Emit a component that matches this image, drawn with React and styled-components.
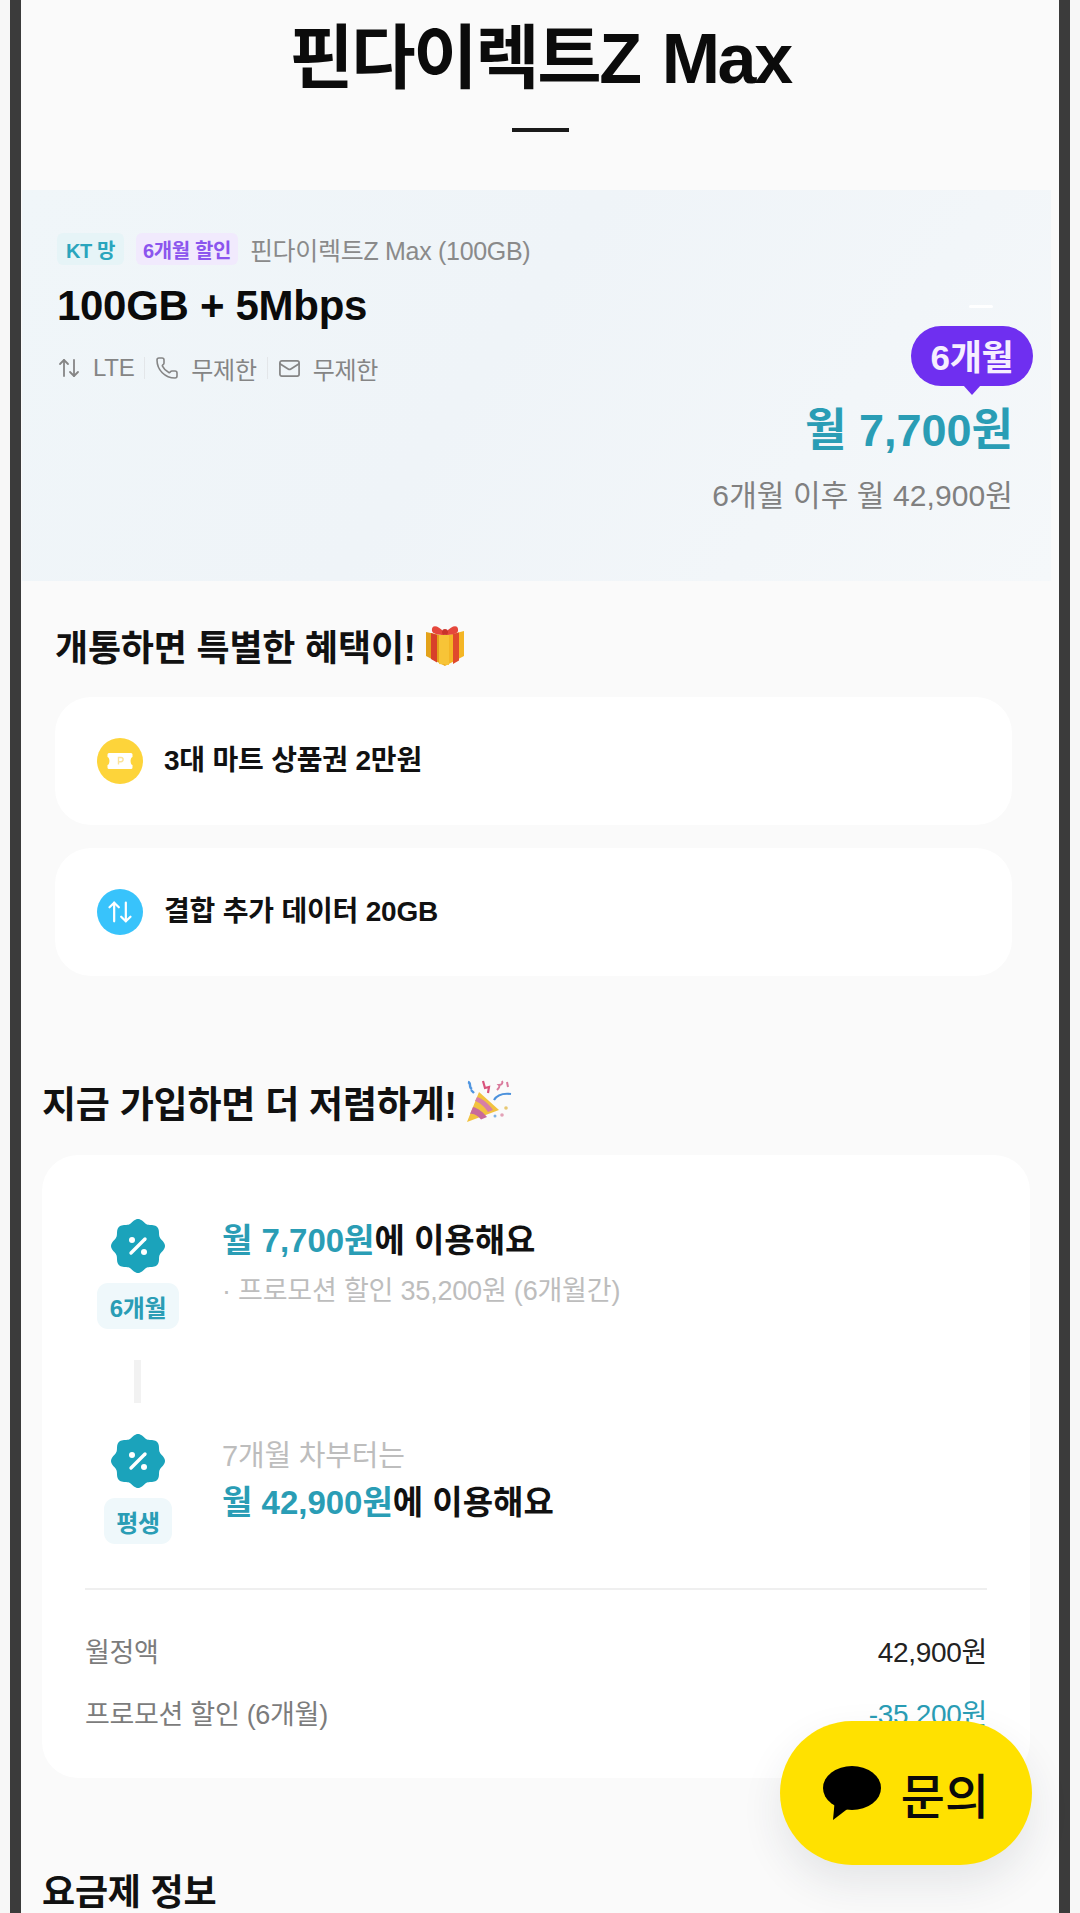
import React from 'react';
import styled, { createGlobalStyle } from 'styled-components';
import { ArrowUpDown, Phone, Mail } from 'lucide-react';

const GlobalStyle = createGlobalStyle`
  html, body { margin: 0; padding: 0; background: #f7f7f7; }
  * { box-sizing: border-box; }
  body { font-family: "Liberation Sans", "Noto Sans CJK KR", sans-serif; }
`;

const Viewport = styled.div`
  width: 1080px;
  height: 1913px;
  padding: 0 10px;
  overflow: hidden;
  background: #f7f7f7;
`;

const Device = styled.main`
  position: relative;
  height: 1913px;
  border-left: 11px solid #3b3b3b;
  border-right: 11px solid #3b3b3b;
  background: #fafafa;
`;

const PageTitle = styled.h1`
  margin: 0;
  padding-top: 15px;
  height: 88px;
  text-align: center;
  font-size: 70px;
  line-height: 88px;
  font-weight: 700;
  letter-spacing: -2.4px;
  word-spacing: 5px;
  color: #0b0b0b;
`;

const TitleRule = styled.div`
  width: 57px;
  height: 4px;
  margin: 40px auto 0;
  background: #1a1a1a;
`;

const Hero = styled.section`
  position: relative;
  width: 1029px;
  height: 391px;
  margin: 58px 0 0 1px;
  padding: 43px 0 0 35px;
  background: linear-gradient(125deg, #f0f6f9 0%, #eff4f8 45%, #f2f6f9 75%, #f5f8fa 100%);
`;

const TagRow = styled.div`
  display: flex;
  align-items: center;
  height: 32px;
`;

const Tag = styled.span`
  display: flex;
  align-items: center;
  height: 32px;
  padding: 0 ${p => p.$pad}px;
  margin-right: ${p => p.$gap}px;
  border-radius: 6px;
  font-size: 20px;
  font-weight: 700;
  letter-spacing: -0.4px;
  color: ${p => p.$fg};
  background: ${p => p.$bg};
`;

const PlanName = styled.span`
  font-size: 25px;
  letter-spacing: -0.3px;
  color: #8a8a8a;
`;

const Allowance = styled.h2`
  margin: 16px 0 0;
  font-size: 42px;
  line-height: 50px;
  font-weight: 700;
  letter-spacing: -0.3px;
  color: #0b0b0b;
`;

const SpecRow = styled.div`
  display: flex;
  align-items: center;
  height: 30px;
  margin-top: 22px;
  color: #858585;
  font-size: 24px;
  letter-spacing: -0.3px;
`;

const Spec = styled.span`
  display: flex;
  align-items: center;
  gap: 12px;
  svg { flex: none; }
`;

const SpecDivider = styled.i`
  width: 1px;
  height: 22px;
  margin: 0 10px;
  background: #e3e6e9;
`;

const PriceBlock = styled.div`
  position: absolute;
  right: 38px;
  top: 211px;
  text-align: right;
`;

const PriceNow = styled.div`
  font-size: 45px;
  line-height: 60px;
  font-weight: 700;
  color: #2a9db5;
`;

const PriceLater = styled.div`
  margin-top: 15px;
  font-size: 30px;
  line-height: 40px;
  letter-spacing: 0.1px;
  color: #808080;
`;

const PeriodBubble = styled.div`
  position: absolute;
  left: 889px;
  top: 136px;
  width: 122px;
  height: 60px;
  padding-bottom: 3px;
  display: flex;
  align-items: center;
  justify-content: center;
  border-radius: 30px;
  background: #6f2ff0;
  color: #f6eeff;
  font-size: 35px;
  font-weight: 700;
  letter-spacing: -0.3px;
  &::after {
    content: '';
    position: absolute;
    left: 52px;
    bottom: -9px;
    border-left: 9px solid transparent;
    border-right: 9px solid transparent;
    border-top: 10px solid #6f2ff0;
  }
`;

const Glint = styled.i`
  position: absolute;
  left: 947px;
  top: 115px;
  width: 24px;
  height: 3px;
  border-radius: 2px;
  background: #fff;
`;

const Benefits = styled.section`
  padding: 41px 47px 0 34px;
`;

const SectionHeading = styled.h3`
  display: flex;
  align-items: center;
  gap: 7px;
  margin: 0;
  height: ${p => p.$h}px;
  font-size: ${p => p.$size}px;
  font-weight: 700;
  letter-spacing: -0.2px;
  color: #111;
  svg { flex: none; }
`;

const BenefitList = styled.div`
  display: flex;
  flex-direction: column;
  gap: 23px;
  margin-top: 29px;
`;

const BenefitCard = styled.div`
  display: flex;
  align-items: center;
  gap: 21px;
  height: 128px;
  padding: 0 0 6px 42px;
  border-radius: 36px;
  background: #fff;
  font-size: 28px;
  font-weight: 700;
  letter-spacing: -0.2px;
  color: #111;
`;

const IconCircle = styled.span`
  display: flex;
  align-items: center;
  justify-content: center;
  width: 46px;
  height: 46px;
  border-radius: 50%;
  background: ${p => p.$bg};
  transform: translateY(3px);
  svg { display: block; }
`;

const Savings = styled.section`
  padding: 101px 29px 0 21px;
`;

const SavingsCard = styled.div`
  margin-top: 28px;
  height: 623px;
  padding: 64px 43px 0 43px;
  border-radius: 36px;
  background: #fff;
`;

const Step = styled.div`
  display: flex;
  height: ${p => p.$h}px;
`;

const StepMark = styled.div`
  width: 137px;
  display: flex;
  flex-direction: column;
  align-items: flex-start;
`;

const MarkInner = styled.div`
  width: 106px;
  display: flex;
  flex-direction: column;
  align-items: center;
  gap: 10px;
`;

const PeriodPill = styled.span`
  display: flex;
  align-items: center;
  justify-content: center;
  height: 46px;
  padding: 0 ${p => p.$pad}px;
  border-radius: 11px;
  background: #eff8fb;
  color: #2a9db5;
  font-size: 24px;
  font-weight: 700;
  letter-spacing: -0.3px;
`;

const Connector = styled.div`
  width: 7px;
  height: 43px;
  margin: 31px 0 31px 49px;
  background: #f2f2f2;
`;

const StepText = styled.div`
  display: flex;
  flex-direction: column;
  gap: ${p => p.$gap}px;
  padding-top: ${p => p.$top}px;
`;

const StepLead = styled.div`
  font-size: 33px;
  line-height: 44px;
  font-weight: 700;
  letter-spacing: 0;
  color: #111;
  em { font-style: normal; color: #2a9db5; }
`;

const StepNote = styled.div`
  font-size: ${p => p.$size}px;
  line-height: 36px;
  letter-spacing: -0.2px;
  color: #bdbdbd;
`;

const CostTable = styled.div`
  padding-top: 42px;
  border-top: 2px solid #efefef;
  display: flex;
  flex-direction: column;
  gap: 26px;
`;

const CostRow = styled.div`
  display: flex;
  justify-content: space-between;
  align-items: center;
  height: 36px;
  font-size: 27px;
  letter-spacing: -0.3px;
  color: #7c7c7c;
`;

const CostValue = styled.span`
  font-size: 28px;
  color: ${p => p.$fg};
`;

const PlanInfo = styled.section`
  padding: 86px 0 0 21px;
`;

const ChatButton = styled.button`
  position: absolute;
  left: 759px;
  top: 1721px;
  width: 252px;
  height: 144px;
  display: flex;
  align-items: center;
  justify-content: center;
  gap: 20px;
  border: 0;
  border-radius: 72px;
  background: #ffe100;
  color: #0a0a0a;
  font-family: inherit;
  font-size: 48px;
  font-weight: 500;
  box-shadow: 0 18px 40px rgba(40, 50, 70, 0.1);
`;

// Eight-lobed rosette used behind the percent sign
const rosettePoints = () => {
  const pts = [];
  for (let i = 0; i < 160; i++) {
    const t = (i / 160) * Math.PI * 2;
    const r = 25.2 + 1.8 * Math.cos(8 * t);
    pts.push(`${(27 + r * Math.sin(t)).toFixed(2)},${(27 - r * Math.cos(t)).toFixed(2)}`);
  }
  return pts.join(' ');
};

const DiscountBadge = () => (
  <svg width="54" height="54" viewBox="0 0 54 54" aria-hidden="true">
    <polygon points={rosettePoints()} fill="#1ba3bb" />
    <path d="M34 20 20 34" stroke="#fff" strokeWidth="3.4" strokeLinecap="round" />
    <circle cx="21" cy="21" r="3" fill="#fff" />
    <circle cx="33" cy="33" r="3" fill="#fff" />
  </svg>
);

const TicketIcon = () => (
  <svg width="30" height="22" viewBox="0 0 28 22" aria-hidden="true">
    <path d="M3 3h22a1.500 1.500 0 0 1 1.500 1.500V7c-2.600.6-2.600 7.400 0 8v2.500A1.500 1.500 0 0 1 25 19H3a1.500 1.500 0 0 1-1.500-1.500V15c2.600-.6 2.600-7.400 0-8V4.500A1.500 1.500 0 0 1 3 3Z" fill="#fff" />
    <path d="M12.500 14.500V7.500h2.500a2.100 2.100 0 0 1 0 4.200h-2.500" fill="none" stroke="#fbe39a" strokeWidth="1.400" />
  </svg>
);

const GiftEmoji = () => (
  <svg width="44" height="44" viewBox="0 0 44 44" aria-hidden="true">
    <path d="M22 13 3 9v24l19 10Z" fill="#e3a21a" />
    <path d="M22 13 41 8v25L22 43Z" fill="#f4b625" />
    <path d="M8 10v26l6 3.500V12Z" fill="#d8402a" />
    <path d="M30 11v30l6-3.500V9.500Z" fill="#e04a2c" />
    <path d="M16 12v29l10 1V12Z" fill="#f7c437" />
    <path d="M21 9C14 1 8 2 9 8c.6 3 7 4 12 4Zm2 0c7-8 13-7 12-1-.6 3-7 4-12 4Z" fill="#e5473c" />
    <circle cx="22" cy="9" r="3" fill="#c9342b" />
  </svg>
);

const PartyEmoji = () => (
  <svg width="50" height="46" viewBox="0 0 50 46" aria-hidden="true">
    <path d="M3 43 15 13l20 18Z" fill="#f2c23e" />
    <path d="M9 28c5 1 11 6 14 10l-6 2.500C14 37 10 34 6 35Z" fill="#c86a9b" />
    <path d="M13 18c5 1 13 8 16 13l-5 2c-3-5-9-10-13-11Z" fill="#d77fa6" />
    <path d="M30 21c3-5 9-7 17-6" fill="none" stroke="#4b91dc" strokeWidth="2.200" />
    <path d="M4 3c4 1 0 5 4 7M7 11l3 3" fill="none" stroke="#4f95e0" strokeWidth="2.400" />
    <path d="M19 2l2 7 4-1-1 6" fill="none" stroke="#d9527b" strokeWidth="2.200" />
    <path d="M33 11c2-2 3-4 2-5 3 0 4-2 3-4M43 3l1 5" fill="none" stroke="#d97a9c" strokeWidth="2" />
    <circle cx="42" cy="29" r="1.800" fill="#e7c873" />
    <circle cx="38" cy="36" r="1.800" fill="#e3a1b6" />
    <circle cx="31" cy="37" r="1.500" fill="#7fb2e5" />
  </svg>
);

const ChatIcon = () => (
  <svg width="58" height="54" viewBox="0 0 58 54" aria-hidden="true">
    <ellipse cx="29" cy="22" rx="29" ry="22" fill="#000" />
    <path d="M12 32 10 54l17-13Z" fill="#000" />
  </svg>
);

export default function App() {
  return (
    <Viewport>
      <GlobalStyle />
      <Device>
        <PageTitle>핀다이렉트Z Max</PageTitle>
        <TitleRule />

        <Hero>
          <TagRow>
            <Tag $fg="#2aa5bd" $bg="#e6f4f7" $pad={9} $gap={12}>KT 망</Tag>
            <Tag $fg="#8b55ee" $bg="#f1eafd" $pad={7} $gap={12}>6개월 할인</Tag>
            <PlanName>핀다이렉트Z Max (100GB)</PlanName>
          </TagRow>
          <Allowance>100GB + 5Mbps</Allowance>
          <SpecRow>
            <Spec><ArrowUpDown size={24} strokeWidth={1.8} />LTE</Spec>
            <SpecDivider />
            <Spec><Phone size={24} strokeWidth={1.6} />무제한</Spec>
            <SpecDivider />
            <Spec><Mail size={23} strokeWidth={1.8} />무제한</Spec>
          </SpecRow>
          <Glint />
          <PeriodBubble>6개월</PeriodBubble>
          <PriceBlock>
            <PriceNow>월 7,700원</PriceNow>
            <PriceLater>6개월 이후 월 42,900원</PriceLater>
          </PriceBlock>
        </Hero>

        <Benefits>
          <SectionHeading $size={36} $h={46}>개통하면 특별한 혜택이! <GiftEmoji /></SectionHeading>
          <BenefitList>
            <BenefitCard>
              <IconCircle $bg="#fdd43a"><TicketIcon /></IconCircle>
              3대 마트 상품권 2만원
            </BenefitCard>
            <BenefitCard>
              <IconCircle $bg="#38c3fb"><ArrowUpDown size={28} color="#fff" strokeWidth={1.9} /></IconCircle>
              결합 추가 데이터 20GB
            </BenefitCard>
          </BenefitList>
        </Benefits>

        <Savings>
          <SectionHeading $size={37} $h={50}>지금 가입하면 더 저렴하게! <PartyEmoji /></SectionHeading>
          <SavingsCard>
            <Step $h={110}>
              <StepMark>
                <MarkInner>
                  <DiscountBadge />
                  <PeriodPill $pad={13}>6개월</PeriodPill>
                </MarkInner>
              </StepMark>
              <StepText $gap={10} $top={0}>
                <StepLead><em>월 7,700원</em>에 이용해요</StepLead>
                <StepNote $size={27}>· 프로모션 할인 35,200원 (6개월간)</StepNote>
              </StepText>
            </Step>
            <Connector />
            <Step $h={154}>
              <StepMark>
                <MarkInner>
                  <DiscountBadge />
                  <PeriodPill $pad={12}>평생</PeriodPill>
                </MarkInner>
              </StepMark>
              <StepText $gap={7} $top={4}>
                <StepNote $size={29}>7개월 차부터는</StepNote>
                <StepLead>
                  <em>월 42,900원</em>에 이용해요
                </StepLead>
              </StepText>
            </Step>
            <CostTable>
              <CostRow>월정액<CostValue $fg="#222">42,900원</CostValue></CostRow>
              <CostRow>프로모션 할인 (6개월)<CostValue $fg="#2a9db5">-35,200원</CostValue></CostRow>
            </CostTable>
          </SavingsCard>
        </Savings>

        <PlanInfo>
          <SectionHeading $size={36} $h={50}>요금제 정보</SectionHeading>
        </PlanInfo>

        <ChatButton><ChatIcon />문의</ChatButton>
      </Device>
    </Viewport>
  );
}
